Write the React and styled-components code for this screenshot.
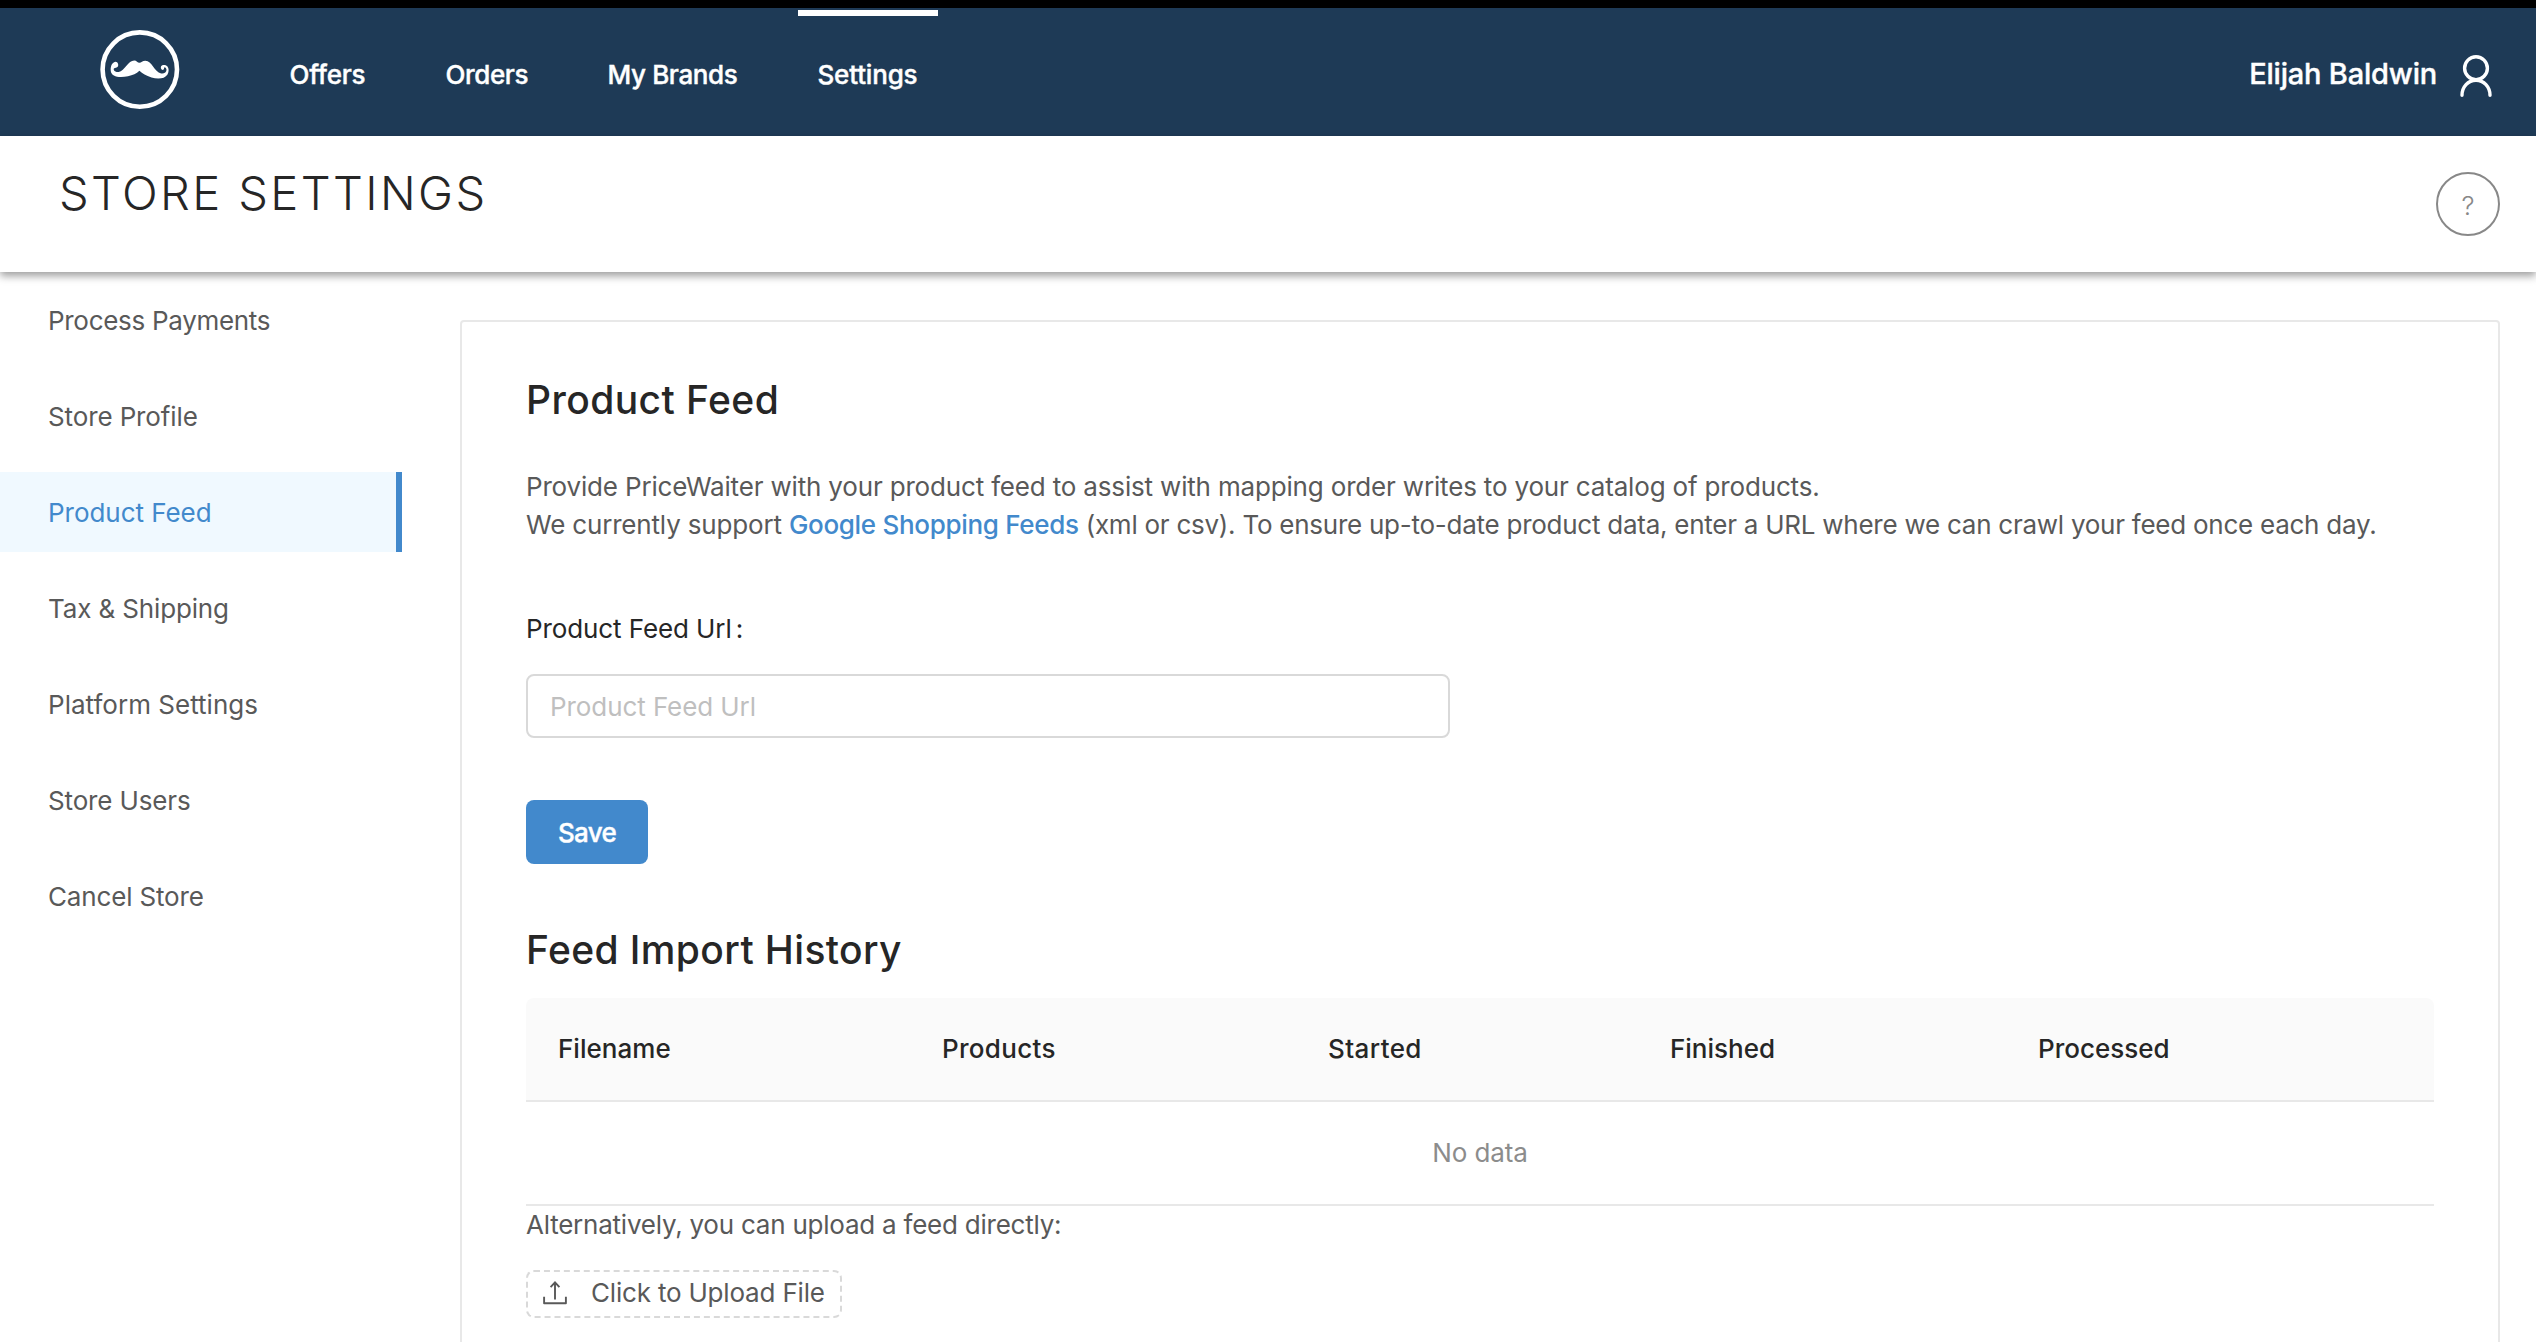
import React from "react";
import styled, { createGlobalStyle } from "styled-components";

const GlobalStyle = createGlobalStyle`
  *, *::before, *::after { box-sizing: border-box; }
  body {
    margin: 0;
    background: #fff;
    color: #595959;
    font-family: Inter, "Liberation Sans", sans-serif;
    font-size: 26px;
    -webkit-font-smoothing: antialiased;
  }
`;

const Page = styled.div`
  display: flex;
  flex-direction: column;
  height: 100vh;
  overflow: hidden;
`;

const TopBar = styled.header`
  display: flex;
  flex: none;
  align-items: flex-start;
  height: 136px;
  padding: 0 44px 0 100px;
  border-top: 8px solid #000;
  background: #1e3a56;
  color: #fff;
  font-weight: 500;
  -webkit-text-stroke: 0.4px currentColor;
`;

const LogoMark = styled.svg`
  flex: none;
  width: 80px;
  height: 80px;
  margin-top: 22px;
`;

const Nav = styled.nav`
  display: flex;
  gap: 40px;
  margin: 2px 0 0 90px;
`;

const NavLink = styled.a`
  width: ${(p) => p.$width}px;
  padding-left: 19.5px;
  border-top: 6px solid ${(p) => (p.$active ? "#fff" : "transparent")};
  color: #fff;
  letter-spacing: ${(p) => p.$tracking}px;
  line-height: 117px;
  white-space: nowrap;
`;

const Account = styled.div`
  display: flex;
  gap: 23px;
  margin-left: auto;
`;

const AccountName = styled.span`
  font-size: 29px;
  letter-spacing: -0.2px;
  line-height: 131px;
`;

const UserIcon = styled.svg`
  width: 32px;
  height: 42px;
  margin-top: 47px;
`;

const TitleBar = styled.div`
  position: relative;
  display: flex;
  flex: none;
  align-items: flex-start;
  justify-content: space-between;
  height: 136px;
  padding: 33px 36px 0 59px;
  background: #fff;
  box-shadow: 0 4px 8px rgba(0, 0, 0, 0.38);
`;

const Title = styled.h1`
  margin: 0;
  color: #262626;
  font-size: 47px;
  font-weight: 300;
  letter-spacing: 2.4px;
  line-height: 48px;
`;

const HelpButton = styled.button`
  width: 64px;
  height: 64px;
  margin-top: 3px;
  padding: 3px 0 0;
  border: 2px solid #888;
  border-radius: 50%;
  background: #fff;
  color: #888;
  font: 300 26px/57px Inter, sans-serif;
`;

const Body = styled.div`
  display: flex;
  flex: 1;
  min-height: 0;
`;

const Sidebar = styled.ul`
  display: flex;
  flex: none;
  flex-direction: column;
  gap: 16px;
  width: 402px;
  margin: 0;
  padding: 8px 0 0;
  list-style: none;
`;

const SidebarItem = styled.li`
  height: 80px;
  padding-left: 48px;
  border-right: 6px solid ${(p) => (p.$active ? "#4289cc" : "transparent")};
  background: ${(p) => (p.$active ? "#f0f9ff" : "transparent")};
  color: ${(p) => (p.$active ? "#4289cc" : "#595959")};
  letter-spacing: ${(p) => p.$tracking}px;
  line-height: 82px;
`;

const Card = styled.main`
  flex: 1;
  height: 1100px;
  margin: 48px 36px 0 58px;
  padding: 52px 64px;
  border: 2px solid #e8e8e8;
  border-radius: 4px;
`;

const Heading = styled.h2`
  margin: ${(p) => (p.$section ? "60px 0 22px" : "0 0 42px")};
  color: #262626;
  font-size: 39px;
  font-weight: 500;
  letter-spacing: ${(p) => (p.$section ? 0.38 : 0.42)}px;
  line-height: 52px;
`;

const Intro = styled.p`
  margin: 0 0 65px;
  letter-spacing: -0.17px;
  line-height: 38px;
`;

const IntroTail = styled.span`
  letter-spacing: -0.253px;
`;

const FeedLink = styled.a`
  color: #4289cc;
  font-weight: 500;
  letter-spacing: -0.31px;
`;

const FieldLabel = styled.label`
  display: block;
  margin-bottom: 25px;
  color: #262626;
  letter-spacing: -0.1px;
  line-height: 40px;

  &::after {
    content: ":";
    margin-left: 4px;
  }
`;

const TextInput = styled.input`
  display: block;
  width: 924px;
  height: 64px;
  padding: 0 22px;
  border: 2px solid #d9d9d9;
  border-radius: 8px;
  font: 400 26px Inter, sans-serif;
  letter-spacing: -0.08px;

  &::placeholder {
    color: #bfbfbf;
    opacity: 1;
  }
`;

const SaveButton = styled.button`
  display: block;
  width: 122px;
  height: 64px;
  margin-top: 62px;
  padding: 2px 0 0;
  border: 0;
  border-radius: 8px;
  background: #4289cc;
  color: #fff;
  font: 500 26px/62px Inter, sans-serif;
  letter-spacing: -0.7px;
  -webkit-text-stroke: 0.4px currentColor;
`;

const Table = styled.table`
  width: 100%;
  border-spacing: 0;
  table-layout: fixed;
`;

const HeadCell = styled.th`
  width: ${(p) => p.$width}px;
  height: 104px;
  padding: 0 0 2px 32px;
  border-bottom: 2px solid #e8e8e8;
  background: #fafafa;
  color: #262626;
  font-weight: 500;
  letter-spacing: ${(p) => p.$tracking}px;
  text-align: left;

  &:first-child { border-top-left-radius: 8px; }
  &:last-child { border-top-right-radius: 8px; }
`;

const EmptyCell = styled.td`
  height: 104px;
  padding: 0 0 2px;
  border-bottom: 2px solid #e8e8e8;
  color: #8c8c8c;
  letter-spacing: -0.1px;
  text-align: center;
`;

const UploadHint = styled.p`
  margin: 0 0 27px;
  letter-spacing: -0.23px;
  line-height: 37px;
`;

const UploadButton = styled.button`
  display: flex;
  align-items: flex-start;
  gap: 24px;
  width: 316px;
  height: 48px;
  padding: 0 0 0 15px;
  border: 2px dashed #d9d9d9;
  border-radius: 8px;
  background: #fff;
  color: #595959;
  font: 400 26px/41px Inter, sans-serif;
  letter-spacing: -0.19px;
  white-space: nowrap;
`;

const UploadIcon = styled.svg`
  flex: none;
  width: 24px;
  height: 24px;
  margin-top: 9px;
`;

const navLinks = [
  { label: "Offers", width: 116, tracking: -0.24 },
  { label: "Orders", width: 122, tracking: -0.38 },
  { label: "My Brands", width: 170, tracking: -0.38 },
  { label: "Settings", width: 140, tracking: -0.18, active: true },
];

const sections = [
  { label: "Process Payments", tracking: -0.3 },
  { label: "Store Profile", tracking: -0.12 },
  { label: "Product Feed", tracking: -0.04, active: true },
  { label: "Tax & Shipping", tracking: -0.14 },
  { label: "Platform Settings", tracking: 0.02 },
  { label: "Store Users", tracking: -0.14 },
  { label: "Cancel Store", tracking: -0.16 },
];

const columns = [
  { label: "Filename", width: 384, tracking: 0.04 },
  { label: "Products", width: 386, tracking: 0.3 },
  { label: "Started", width: 342, tracking: 0.4 },
  { label: "Finished", width: 368, tracking: 0 },
  { label: "Processed", width: 428, tracking: 0 },
];

function Logo() {
  return (
    <LogoMark viewBox="0 0 80 80">
      <circle cx="39.8" cy="39.6" r="37.2" fill="none" stroke="#fff" strokeWidth="4.6" />
      <path
        fill="#fff"
        d="M10.7 40.5C10.4 35 13 31.8 15.6 31.7C17.8 31.8 18.8 34.5 17.9 36.6C17 38.3 15 37.5 13.9 38.4C13 40.2 15.5 42.4 18.6 41.9C24.8 40.6 28.2 30.4 34.2 30.4C36.6 30.4 37.6 32.7 39.4 32.8C41.2 32.7 42.4 30.8 45.4 30.8C52 30.8 54 42 61.2 43.4C64 43.9 66.6 42.3 66.5 39.8C66.3 38 65.2 37.1 64.3 37.4C63.9 38.3 64.2 39.5 62.9 39.9C61 40 60.3 37.5 61.2 36.1C62.2 34.6 65.4 34.3 67.3 36.3C69 38.2 69.1 41.6 67.5 44.4C64.6 49 57.6 49.3 51.5 47.4C46 45.7 42.5 43.6 39.4 40.8C36.4 43.6 32.8 45.3 28 46.3C20 48 11.2 47.4 10.7 40.5Z"
      />
    </LogoMark>
  );
}

export default function App() {
  return (
    <Page>
      <GlobalStyle />
      <TopBar>
        <Logo />
        <Nav>
          {navLinks.map((link) => (
            <NavLink key={link.label} $width={link.width} $tracking={link.tracking} $active={link.active}>
              {link.label}
            </NavLink>
          ))}
        </Nav>
        <Account>
          <AccountName>Elijah Baldwin</AccountName>
          <UserIcon viewBox="0 0 32 42" fill="none" stroke="#fff" strokeWidth="3.4" strokeLinecap="round">
            <circle cx="16" cy="13.2" r="11.4" />
            <path d="M2 40.3C2 32 8 25.2 16 25.2S30 32 30 40.3" />
          </UserIcon>
        </Account>
      </TopBar>
      <TitleBar>
        <Title>STORE SETTINGS</Title>
        <HelpButton>?</HelpButton>
      </TitleBar>
      <Body>
        <Sidebar>
          {sections.map((item) => (
            <SidebarItem key={item.label} $tracking={item.tracking} $active={item.active}>
              {item.label}
            </SidebarItem>
          ))}
        </Sidebar>
        <Card>
          <Heading>Product Feed</Heading>
          <Intro>
            Provide PriceWaiter with your product feed to assist with mapping order writes to your catalog of products.
            <br />
            We currently support <FeedLink>Google Shopping Feeds</FeedLink>
            <IntroTail>
              {" "}
              (xml or csv). To ensure up-to-date product data, enter a URL where we can crawl your feed once each day.
            </IntroTail>
          </Intro>
          <FieldLabel htmlFor="feed-url">Product Feed Url</FieldLabel>
          <TextInput id="feed-url" placeholder="Product Feed Url" />
          <SaveButton>Save</SaveButton>
          <Heading $section>Feed Import History</Heading>
          <Table>
            <thead>
              <tr>
                {columns.map((col) => (
                  <HeadCell key={col.label} $width={col.width} $tracking={col.tracking}>
                    {col.label}
                  </HeadCell>
                ))}
              </tr>
            </thead>
            <tbody>
              <tr>
                <EmptyCell colSpan={columns.length}>No data</EmptyCell>
              </tr>
            </tbody>
          </Table>
          <UploadHint>Alternatively, you can upload a feed directly:</UploadHint>
          <UploadButton>
            <UploadIcon viewBox="0 0 24 24" fill="none" stroke="#595959" strokeWidth="1.9">
              <path d="M1.1 15.8V22.3H22.9V15.8" strokeLinejoin="round" />
              <path d="M12 18.6V1.8M7.6 6.2L12 1.4L16.4 6.2" />
            </UploadIcon>
            Click to Upload File
          </UploadButton>
        </Card>
      </Body>
    </Page>
  );
}
